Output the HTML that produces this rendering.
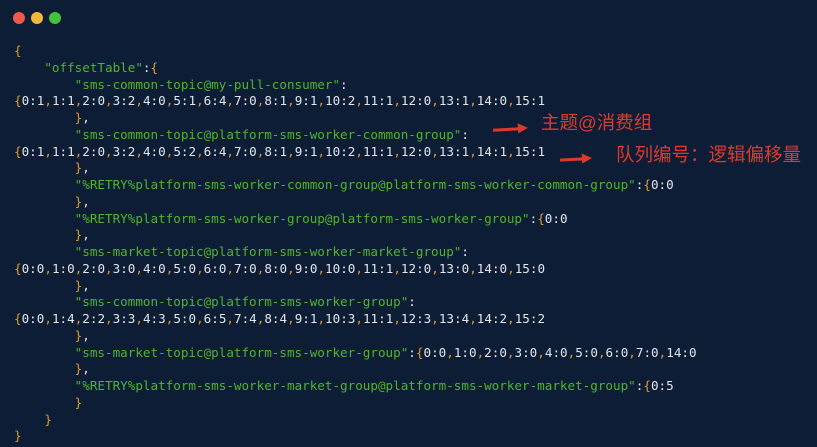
<!DOCTYPE html>
<html><head><meta charset="utf-8"><style>
html,body{margin:0;padding:0;}
body{width:817px;height:447px;background:#0c1d35;overflow:hidden;position:relative;font-family:"DejaVu Sans Mono","Liberation Mono",monospace;}
.dot{position:absolute;top:12px;width:12px;height:12px;border-radius:50%;}
pre{position:absolute;left:14px;top:43px;margin:0;font-family:"DejaVu Sans Mono","Liberation Mono",monospace;font-size:12.6px;line-height:16.75px;color:#e4e6ea;}
.o{color:#e09a2c}.g{color:#4fb52d}
.ann{position:absolute;color:#e0392b;font-family:"Liberation Sans","Noto Sans CJK SC",sans-serif;font-size:18.5px;line-height:1;}
.arr{position:absolute;height:3px;background:#e0392b;}
.arr:after{content:"";position:absolute;right:-8px;top:-4px;border-left:10px solid #e0392b;border-top:5.5px solid transparent;border-bottom:5.5px solid transparent;}
</style></head><body>
<div class="dot" style="left:13px;background:#f0574d"></div>
<div class="dot" style="left:31px;background:#f5b73b"></div>
<div class="dot" style="left:49px;background:#43c23b"></div>
<pre><span class="o">{</span>
    <span class="g">"offsetTable"</span>:<span class="o">{</span>
        <span class="g">"sms-common-topic@my-pull-consumer"</span>:
<span class="o">{</span>0:1<span class="o">,</span>1:1<span class="o">,</span>2:0<span class="o">,</span>3:2<span class="o">,</span>4:0<span class="o">,</span>5:1<span class="o">,</span>6:4<span class="o">,</span>7:0<span class="o">,</span>8:1<span class="o">,</span>9:1<span class="o">,</span>10:2<span class="o">,</span>11:1<span class="o">,</span>12:0<span class="o">,</span>13:1<span class="o">,</span>14:0<span class="o">,</span>15:1
        <span class="o">}</span>,
        <span class="g">"sms-common-topic@platform-sms-worker-common-group"</span>:
<span class="o">{</span>0:1<span class="o">,</span>1:1<span class="o">,</span>2:0<span class="o">,</span>3:2<span class="o">,</span>4:0<span class="o">,</span>5:2<span class="o">,</span>6:4<span class="o">,</span>7:0<span class="o">,</span>8:1<span class="o">,</span>9:1<span class="o">,</span>10:2<span class="o">,</span>11:1<span class="o">,</span>12:0<span class="o">,</span>13:1<span class="o">,</span>14:1<span class="o">,</span>15:1
        <span class="o">}</span>,
        <span class="g">"%RETRY%platform-sms-worker-common-group@platform-sms-worker-common-group"</span>:<span class="o">{</span>0:0
        <span class="o">}</span>,
        <span class="g">"%RETRY%platform-sms-worker-group@platform-sms-worker-group"</span>:<span class="o">{</span>0:0
        <span class="o">}</span>,
        <span class="g">"sms-market-topic@platform-sms-worker-market-group"</span>:
<span class="o">{</span>0:0<span class="o">,</span>1:0<span class="o">,</span>2:0<span class="o">,</span>3:0<span class="o">,</span>4:0<span class="o">,</span>5:0<span class="o">,</span>6:0<span class="o">,</span>7:0<span class="o">,</span>8:0<span class="o">,</span>9:0<span class="o">,</span>10:0<span class="o">,</span>11:1<span class="o">,</span>12:0<span class="o">,</span>13:0<span class="o">,</span>14:0<span class="o">,</span>15:0
        <span class="o">}</span>,
        <span class="g">"sms-common-topic@platform-sms-worker-group"</span>:
<span class="o">{</span>0:0<span class="o">,</span>1:4<span class="o">,</span>2:2<span class="o">,</span>3:3<span class="o">,</span>4:3<span class="o">,</span>5:0<span class="o">,</span>6:5<span class="o">,</span>7:4<span class="o">,</span>8:4<span class="o">,</span>9:1<span class="o">,</span>10:3<span class="o">,</span>11:1<span class="o">,</span>12:3<span class="o">,</span>13:4<span class="o">,</span>14:2<span class="o">,</span>15:2
        <span class="o">}</span>,
        <span class="g">"sms-market-topic@platform-sms-worker-group"</span>:<span class="o">{</span>0:0<span class="o">,</span>1:0<span class="o">,</span>2:0<span class="o">,</span>3:0<span class="o">,</span>4:0<span class="o">,</span>5:0<span class="o">,</span>6:0<span class="o">,</span>7:0<span class="o">,</span>14:0
        <span class="o">}</span>,
        <span class="g">"%RETRY%platform-sms-worker-market-group@platform-sms-worker-market-group"</span>:<span class="o">{</span>0:5
        <span class="o">}</span>
    <span class="o">}</span>
<span class="o">}</span></pre>
<div class="arr" style="left:493px;top:128px;width:27px;transform:rotate(-3deg)"></div>
<div class="ann" style="left:541px;top:114px">主题@消费组</div>
<div class="arr" style="left:560px;top:158px;width:24px;transform:rotate(-3deg)"></div>
<div class="ann" style="left:616px;top:146px">队列编号：逻辑偏移量</div>
</body></html>
